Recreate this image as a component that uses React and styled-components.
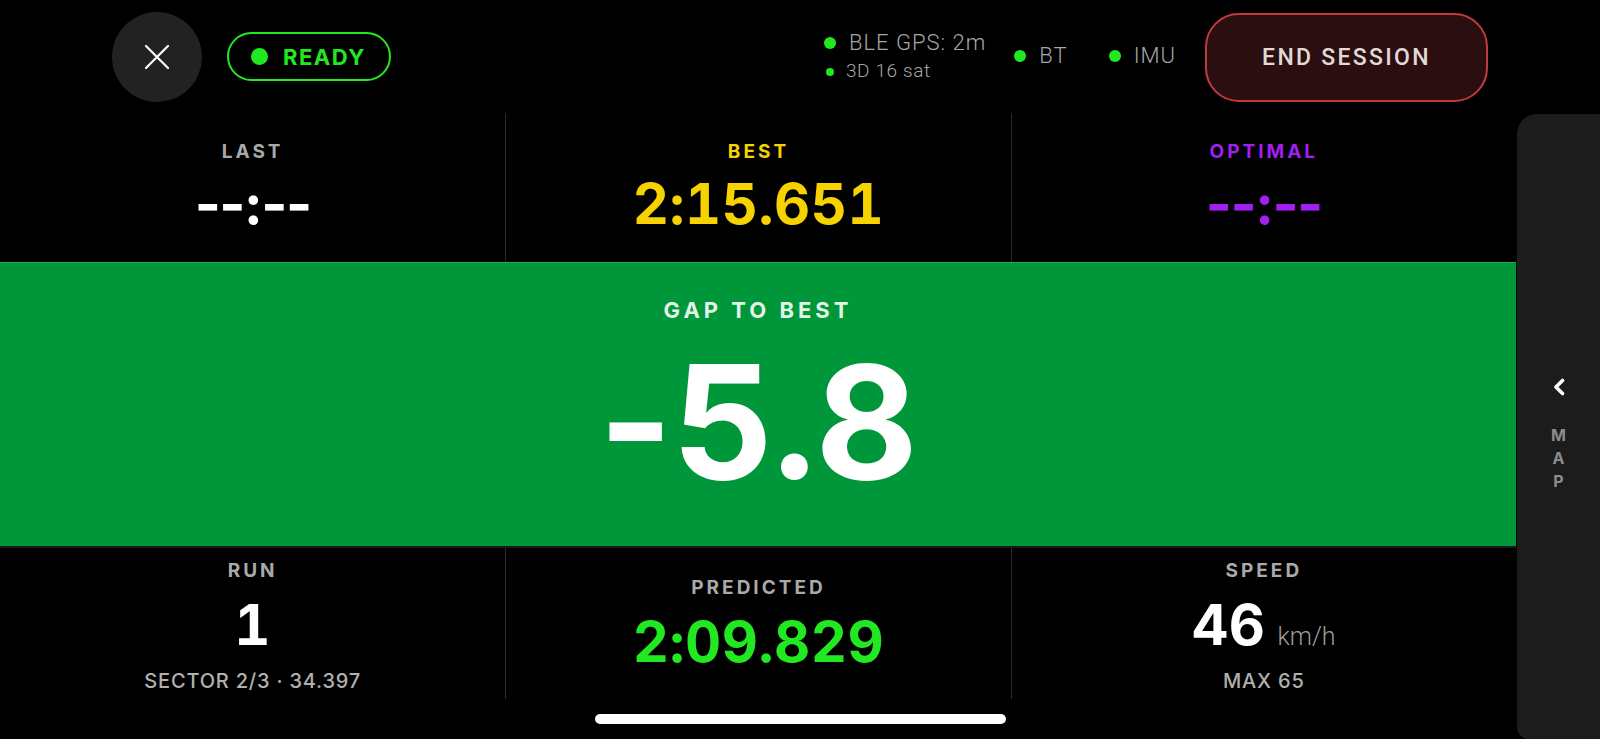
import React from 'react'
import styled, { createGlobalStyle } from 'styled-components'

const GlobalStyle = createGlobalStyle`
  html, body {
    margin: 0;
    padding: 0;
    background: #000;
  }
  body {
    font-family: Inter, "Noto Sans", sans-serif;
    color: #fff;
    -webkit-font-smoothing: antialiased;
  }
`

const GREEN = '#22e822'

const Screen = styled.div`
  position: relative;
  width: 1600px;
  height: 739px;
  background: #000;
  display: flex;
  flex-direction: column;
  overflow: hidden;
`

const TopBar = styled.div`
  height: 113px;
  flex: none;
  display: flex;
  align-items: center;
  padding: 0 112px;
  box-sizing: border-box;
`

const CloseButton = styled.button`
  width: 90px;
  height: 90px;
  border-radius: 50%;
  border: none;
  background: #222;
  display: flex;
  align-items: center;
  justify-content: center;
  padding: 0;
  margin-top: 1px;
`

const ReadyPill = styled.div`
  margin-left: 25px;
  height: 49px;
  width: 164px;
  box-sizing: border-box;
  border: 2px solid ${GREEN};
  border-radius: 25px;
  display: flex;
  align-items: center;
  gap: 15px;
  padding-left: 22px;
  color: ${GREEN};
  font-weight: 700;
  font-size: 22px;
  letter-spacing: 1.5px;
`

const Dot = styled.span`
  width: ${p => p.$size}px;
  height: ${p => p.$size}px;
  border-radius: 50%;
  background: ${GREEN};
  flex: none;
`

const Spacer = styled.div`
  flex: 1;
`

const StatusGroup = styled.div`
  display: flex;
  align-items: center;
  gap: 28px;
  margin-right: 29px;
`

const GpsBlock = styled.div`
  display: flex;
  flex-direction: column;
  gap: 6px;
`

const StatusItem = styled.div`
  display: flex;
  align-items: center;
  gap: ${p => p.$gap || 13}px;
  font-family: Roboto, "Liberation Sans", sans-serif;
  font-weight: 300;
  font-size: ${p => p.$size || 22}px;
  letter-spacing: ${p => p.$spacing ?? 1}px;
  line-height: 1.1;
  color: #a6a6a6;
  padding-left: ${p => p.$indent || 0}px;
  margin-right: ${p => p.$trail || 0}px;
`

const EndButton = styled.button`
  width: 283px;
  height: 89px;
  border-radius: 34px;
  border: 2.5px solid #c23a3c;
  background: #2a0e10;
  color: #e2d8d8;
  font-family: Roboto, "Liberation Sans", sans-serif;
  font-weight: 500;
  font-size: 23px;
  letter-spacing: 2.3px;
  margin-top: 1px;
`

const Body = styled.div`
  flex: 1;
  display: flex;
`

const Board = styled.div`
  flex: 1;
  display: flex;
  flex-direction: column;
`

const StatRow = styled.div`
  display: grid;
  grid-template-columns: repeat(3, 1fr);
  height: ${p => p.$height}px;
`

const Cell = styled.div`
  display: flex;
  flex-direction: column;
  align-items: center;
  justify-content: center;
  border-left: ${p => (p.$first ? 'none' : '1px solid #2b2b2b')};
  padding-bottom: ${p => p.$lift || 0}px;
  padding-top: ${p => p.$drop || 0}px;
`

const Label = styled.div`
  font-weight: 700;
  font-size: 19px;
  letter-spacing: 3px;
  line-height: 1;
  color: ${p => p.$color || '#a9a9a9'};
  margin-bottom: ${p => p.$gap}px;
`

// lap times use fixed-width digits; the empty "--:--" placeholder stays proportional
const Value = styled.div`
  font-weight: 700;
  font-size: 56px;
  line-height: 1;
  font-variant-numeric: ${p => (p.$tight ? 'normal' : 'tabular-nums')};
  letter-spacing: ${p => (p.$tight ? -1.5 : 0.5)}px;
  color: ${p => p.$color || '#fff'};
  display: flex;
  align-items: baseline;
`

const Unit = styled.span`
  font-family: Roboto, "Liberation Sans", sans-serif;
  font-weight: 300;
  font-size: 25px;
  letter-spacing: 0;
  color: #9c9c9c;
  margin-left: 12px;
`

const Sub = styled.div`
  margin-top: 18px;
  font-weight: 500;
  font-size: 20px;
  letter-spacing: 0.8px;
  line-height: 1;
  color: #b0b0b0;
`

const GapBand = styled.div`
  height: 286px;
  box-sizing: border-box;
  background: #00963a;
  border-top: 1px solid #2aa955;
  border-bottom: 2px solid #1a1a1a;
  display: flex;
  flex-direction: column;
  align-items: center;
  padding-top: 36px;
`

const GapLabel = styled.div`
  font-weight: 700;
  font-size: 22px;
  letter-spacing: 4px;
  line-height: 1;
  color: #e3f4e7;
`

const GapValue = styled.div`
  margin-top: 22px;
  font-weight: 700;
  font-size: 158px;
  line-height: 1;
  letter-spacing: -1px;
  color: #fff;
`

const SidePanel = styled.div`
  width: 83px;
  margin-top: 1px;
  margin-left: 1px;
  background: #1c1c1c;
  border-radius: 20px 0 0 12px;
  display: flex;
  flex-direction: column;
  align-items: center;
  justify-content: center;
  padding-top: 18px;
  box-sizing: border-box;
`

const PanelLetters = styled.div`
  margin-top: 28px;
  display: flex;
  flex-direction: column;
  align-items: center;
  font-weight: 700;
  font-size: 16px;
  line-height: 23px;
  color: #8c8c8c;
`

const HomeIndicator = styled.div`
  position: absolute;
  left: 595px;
  bottom: 15px;
  width: 411px;
  height: 10px;
  border-radius: 5px;
  background: #fff;
`

function Cross() {
  return (
    <svg width="26" height="26" viewBox="0 0 26 26">
      <path d="M2 2 L24 24 M24 2 L2 24" stroke="#fff" strokeWidth="2.2" strokeLinecap="round" />
    </svg>
  )
}

function Chevron() {
  return (
    <svg width="14" height="18" viewBox="0 0 14 18">
      <path d="M10.5 2.5 L4 9 L10.5 15.5" stroke="#fff" strokeWidth="3.6" fill="none" strokeLinecap="round" strokeLinejoin="round" />
    </svg>
  )
}

export default function App() {
  return (
    <Screen>
      <GlobalStyle />
      <TopBar>
        <CloseButton><Cross /></CloseButton>
        <ReadyPill>
          <Dot $size={17} />
          READY
        </ReadyPill>
        <Spacer />
        <StatusGroup>
          <GpsBlock>
            <StatusItem>
              <Dot $size={12} />
              BLE GPS: 2m
            </StatusItem>
            <StatusItem $size={19} $spacing={0.6} $gap={12} $indent={2}>
              <Dot $size={8} />
              3D 16 sat
            </StatusItem>
          </GpsBlock>
          <StatusItem $trail={13}>
            <Dot $size={12} />
            BT
          </StatusItem>
          <StatusItem>
            <Dot $size={12} />
            IMU
          </StatusItem>
        </StatusGroup>
        <EndButton>END SESSION</EndButton>
      </TopBar>

      <Body>
        <Board>
          <StatRow $height={149}>
            <Cell $first $lift={1}>
              <Label $gap={15}>LAST</Label>
              <Value $tight>--:--</Value>
            </Cell>
            <Cell $lift={1}>
              <Label $color="#f6d200" $gap={15}>BEST</Label>
              <Value $color="#f6d200">2:15.651</Value>
            </Cell>
            <Cell $lift={1}>
              <Label $color="#a21ff2" $gap={15}>OPTIMAL</Label>
              <Value $color="#a21ff2" $tight>--:--</Value>
            </Cell>
          </StatRow>

          <GapBand>
            <GapLabel>GAP TO BEST</GapLabel>
            <GapValue>-5.8</GapValue>
          </GapBand>

          <StatRow $height={151}>
            <Cell $first $drop={5}>
              <Label $gap={17}>RUN</Label>
              <Value>1</Value>
              <Sub>SECTOR 2/3 · 34.397</Sub>
            </Cell>
            <Cell $drop={1}>
              <Label $gap={17}>PREDICTED</Label>
              <Value $color={GREEN}>2:09.829</Value>
            </Cell>
            <Cell $drop={5}>
              <Label $gap={17}>SPEED</Label>
              <Value>
                46<Unit>km/h</Unit>
              </Value>
              <Sub>MAX 65</Sub>
            </Cell>
          </StatRow>
        </Board>

        <SidePanel>
          <Chevron />
          <PanelLetters>
            {'MAP'.split('').map(ch => <span key={ch}>{ch}</span>)}
          </PanelLetters>
        </SidePanel>
      </Body>

      <HomeIndicator />
    </Screen>
  )
}
